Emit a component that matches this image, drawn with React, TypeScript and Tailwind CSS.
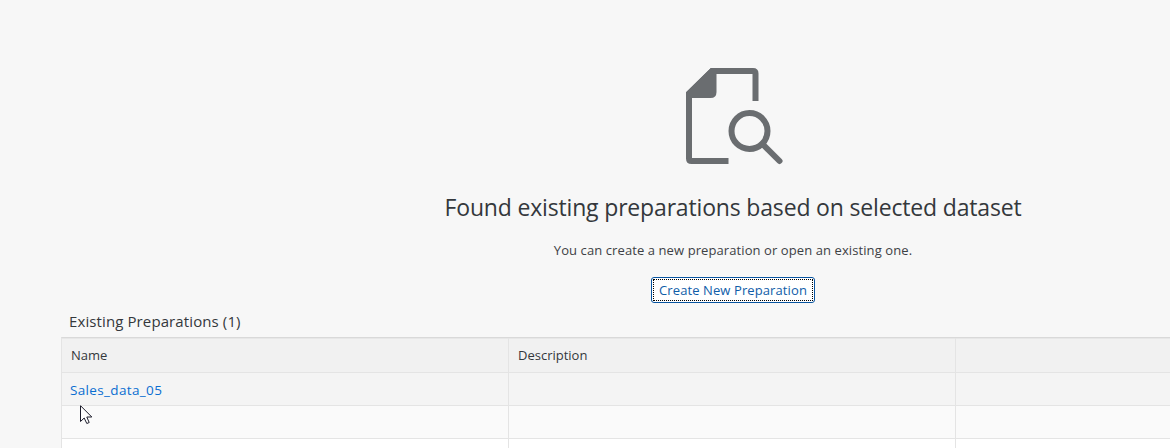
const cell = "border-r border-[#e4e4e4]";

function DocumentSearchIcon() {
  return (
    <svg width="98" height="98" viewBox="0 0 98 98" fill="none" className="block">
      <path d="M70.500 34V6.500Q70.500 4 68 4H27L4 26.500V91.500Q4 94 6.500 94H43.500" stroke="#6a6d70" strokeWidth="6" />
      <path d="M26 1H31.500V25Q31.500 31 25.500 31H1V25.500Z" fill="#6a6d70" />
      <circle cx="64.500" cy="64" r="18" stroke="#6a6d70" strokeWidth="6" />
      <path d="M77.500 77L94.500 94" stroke="#6a6d70" strokeWidth="6" strokeLinecap="round" />
    </svg>
  );
}

function Pointer() {
  return (
    <svg width="13" height="20" viewBox="0 0 13 20" className="absolute left-[80px] top-[405px]">
      <path d="M.5.7V16.500L4.200 13L6.800 18.500L9.200 17.500L6.800 12H11.800Z" fill="white" stroke="#1c1c2b" />
    </svg>
  );
}

export default function App() {
  return (
    <div className="relative flex h-[448px] w-full flex-col overflow-hidden bg-[#f7f7f7] font-['Open_Sans',sans-serif] text-[#34383c]">
      <header className="ml-[296px] flex h-[303px] flex-col items-center pt-[67px]">
        <div className="ml-px h-[98px]"><DocumentSearchIcon /></div>
        <h1 className="mt-[24px] h-9 whitespace-nowrap text-[23px] leading-9 tracking-[-0.17px]">Found existing preparations based on selected dataset</h1>
        <p className="mt-[15px] h-5 whitespace-nowrap text-[13px] leading-5 tracking-[0.09px] text-[#3d4145]">You can create a new preparation or open an existing one.</p>
        <button className="mt-[17px] h-[26px] w-[164px] shrink-0 rounded-[3px] border border-[#0854a0] bg-white p-px text-[#0f5da8]">
          <span className="flex h-full items-center justify-center whitespace-nowrap border border-dotted border-black pt-px text-[13px] tracking-[0.1px]">Create New Preparation</span>
        </button>
      </header>
      <h2 className="h-[34px] pl-[69px] text-[15px] leading-[37px] tracking-[0.11px]"><span>Existing Preparations (1)</span></h2>
      <div className="ml-[61px] w-[1109px] border-l border-t border-l-[#e4e4e4] border-t-[#d9d9d9] text-[13px]">
        <div className="grid h-[35px] grid-cols-[447px_447px_1fr] border-b border-[#e4e4e4] bg-[#f1f1f1] shadow-[inset_0_1px_0_#e7e7e7]">
          <div className={`${cell} pl-[9px] leading-[35px]`}><span>Name</span></div>
          <div className={`${cell} pl-[9px] leading-[35px]`}><span>Description</span></div>
        </div>
        <div className="grid h-[33px] grid-cols-[447px_447px_1fr] border-b border-[#e4e4e4] bg-[#f4f4f4]">
          <div className={`${cell} pl-2 text-[13.5px] leading-[34px] tracking-[0.35px] text-[#0a6ed1]`}><span>Sales_data_05</span></div>
          <div className={cell} />
        </div>
        <div className="grid h-[33px] grid-cols-[447px_447px_1fr] border-b border-[#e4e4e4] bg-[#fafafa]">
          <div className={cell} /><div className={cell} />
        </div>
        <div className="grid h-[9px] grid-cols-[447px_447px_1fr] bg-white">
          <div className={cell} /><div className={cell} />
        </div>
      </div>
      <Pointer />
    </div>
  );
}
